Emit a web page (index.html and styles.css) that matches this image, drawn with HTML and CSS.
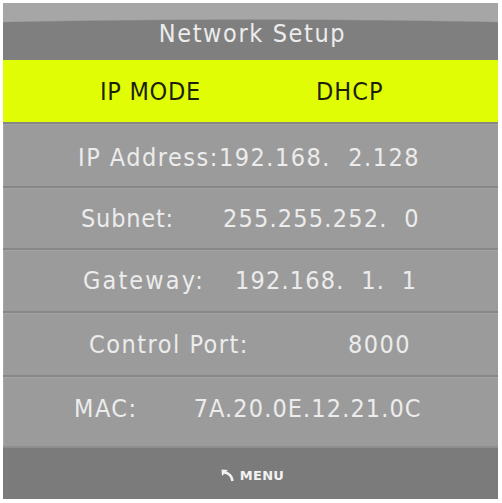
FILE: index.html
```html
<!DOCTYPE html>
<html>
<head>
<meta charset="utf-8">
<link rel="stylesheet" href="styles.css">
</head>
<body>
<div class="screen">
  <div class="header"><span class="title">Network Setup</span></div>
  <div class="mode">
    <span class="mode-label">IP MODE</span>
    <span class="mode-val">DHCP</span>
  </div>
  <div class="row r-ip"><span class="txt">IP Address:192.168.  2.128</span></div>
  <div class="row r-subnet"><span class="lbl">Subnet:</span><span class="val">255.255.252.  0</span></div>
  <div class="row r-gw"><span class="lbl">Gateway:</span><span class="val">192.168.  1.  1</span></div>
  <div class="row r-port"><span class="lbl">Control Port:</span><span class="val">8000</span></div>
  <div class="row r-mac"><span class="lbl">MAC:</span><span class="val">7A.20.0E.12.21.0C</span></div>
  <div class="footer">
    <svg class="back" width="14" height="13" viewBox="0 0 14 13"><path d="M0.5 0.5 L7 1 L1 7 Z" fill="#f2f2f2"/><path d="M3.5 3.5 Q10.5 4.5 11.5 12" fill="none" stroke="#f2f2f2" stroke-width="2.6"/></svg>
    <span class="menu">MENU</span>
  </div>
</div>
</body>
</html>
```
FILE: styles.css
```css
html, body {
  margin: 0;
  padding: 0;
  background: #ffffff;
}
.screen {
  margin: 3px 4px 4px 3px;
  width: 495px;
  height: 496px;
  display: flex;
  flex-direction: column;
  font-family: "DejaVu Sans Condensed", "DejaVu Sans", sans-serif;
  font-stretch: condensed;
  color: #ececec;
  background: #9b9b9b;
}
.header {
  height: 57px;
  display: flex;
  align-items: center;
  justify-content: center;
  background: radial-gradient(ellipse 150% 42px at 50% 58px, #7f7f7f 97%, #a6a6a6 100%);
}
.title {
  font-size: 25px;
  letter-spacing: 1.6px;
  padding-top: 3px;
  padding-left: 4px;
}
.mode {
  height: 62px;
  background: #e0fd05;
  color: #1d1f0a;
  display: flex;
  align-items: center;
  font-size: 25px;
  padding-top: 1px;
  box-sizing: border-box;
}
.mode-label { margin-left: 97px; width: 216px; letter-spacing: 0.7px; }
.mode-val { letter-spacing: 1px; }
.row {
  display: flex;
  align-items: center;
  font-size: 25px;
  letter-spacing: 1.5px;
  white-space: pre;
  box-shadow: inset 0 2px 0 #878787, inset 0 3px 0 #a4a4a4, inset 1px 0 0 #a8a8a8;
  padding-top: 2px;
  box-sizing: border-box;
}
.r-ip { height: 64px; padding-left: 75px; padding-top: 6px; }
.r-subnet { height: 62px; padding-left: 78px; }
.r-subnet .lbl { letter-spacing: 0.8px; }
.r-subnet .val { margin-left: 49px; letter-spacing: 1.2px; }
.r-gw { height: 63px; padding-left: 80px; }
.r-gw .lbl { letter-spacing: 2.1px; }
.r-gw .val { margin-left: 30px; letter-spacing: 1.2px; }
.r-port { height: 64px; padding-left: 86px; }
.r-port .val { margin-left: 99px; }
.r-mac { height: 71px; padding-left: 71px; padding-bottom: 7px; }
.r-mac .val { margin-left: 56px; letter-spacing: 1.1px; }
.footer {
  flex: 1;
  background: #7b7b7b;
  display: flex;
  align-items: center;
  justify-content: center;
  gap: 5px;
  box-shadow: inset 0 2px 0 #8e8e8e;
  padding-top: 6px;
  padding-left: 4px;
}
.menu {
  font-family: "DejaVu Sans", sans-serif;
  font-stretch: normal;
  font-size: 13px;
  font-weight: bold;
  letter-spacing: 0.3px;
  color: #f2f2f2;
}
```
